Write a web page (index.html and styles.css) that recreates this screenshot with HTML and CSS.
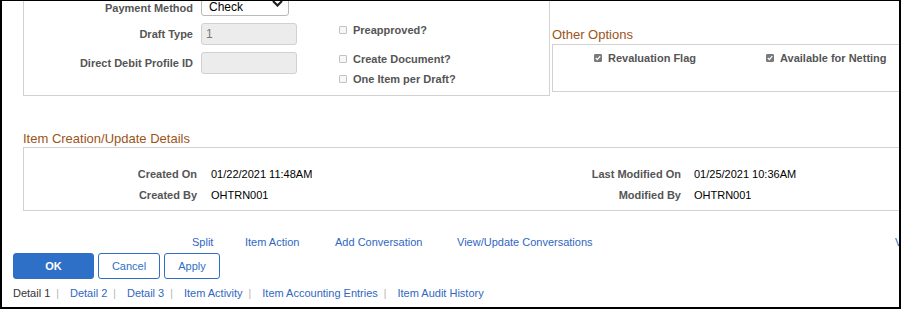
FILE: index.html
```html
<!DOCTYPE html>
<html lang="en">
<head>
<meta charset="utf-8">
<title>Item Details</title>
<link rel="stylesheet" href="styles.css">
</head>
<body>
<div class="frame">
  <div class="page">
    <div class="top-row">
      <div class="box pay-box">
        <div class="fields">
          <div class="field first">
            <span class="label">Payment Method</span>
            <div class="select">
              <span class="select-text">Check</span>
              <svg class="chev" width="11" height="7" viewBox="0 0 11 7"><polyline points="1,1 5.5,5.5 10,1" fill="none" stroke="#222" stroke-width="2.2"/></svg>
            </div>
          </div>
          <div class="field">
            <span class="label">Draft Type</span>
            <div class="input">1</div>
          </div>
          <div class="field">
            <span class="label">Direct Debit Profile ID</span>
            <div class="input"></div>
          </div>
        </div>
        <div class="checks">
          <div class="check first"><span class="cb"></span><span class="clabel">Preapproved?</span></div>
          <div class="check second"><span class="cb"></span><span class="clabel">Create Document?</span></div>
          <div class="check"><span class="cb"></span><span class="clabel">One Item per Draft?</span></div>
        </div>
      </div>
      <div class="other">
        <h2 class="sec-title other-title">Other Options</h2>
        <div class="box other-box">
          <div class="check"><span class="cb on"><svg width="6" height="6" viewBox="0 0 6 6"><polyline points="0.8,3 2.4,4.6 5.2,1.2" fill="none" stroke="#fff" stroke-width="1.3"/></svg></span><span class="clabel">Revaluation Flag</span></div>
          <div class="check"><span class="cb on"><svg width="6" height="6" viewBox="0 0 6 6"><polyline points="0.8,3 2.4,4.6 5.2,1.2" fill="none" stroke="#fff" stroke-width="1.3"/></svg></span><span class="clabel">Available for Netting</span></div>
        </div>
      </div>
    </div>

    <section class="details">
      <h2 class="sec-title">Item Creation/Update Details</h2>
      <div class="box details-box">
        <span class="dlabel l1">Created On</span><span class="dval">01/22/2021 11:48AM</span>
        <span class="dlabel l2">Last Modified On</span><span class="dval">01/25/2021 10:36AM</span>
        <span class="dlabel l1">Created By</span><span class="dval">OHTRN001</span>
        <span class="dlabel l2">Modified By</span><span class="dval">OHTRN001</span>
      </div>
    </section>

    <nav class="links">
      <a>Split</a>
      <a>Item Action</a>
      <a>Add Conversation</a>
      <a>View/Update Conversations</a>
      <a>View Item Details</a>
    </nav>

    <div class="buttons">
      <button class="btn primary">OK</button>
      <button class="btn cancel">Cancel</button>
      <button class="btn apply">Apply</button>
    </div>

    <div class="tabs">
      <span class="tab current">Detail 1</span><span class="sep">|</span>
      <a class="tab">Detail 2</a><span class="sep">|</span>
      <a class="tab">Detail 3</a><span class="sep">|</span>
      <a class="tab">Item Activity</a><span class="sep">|</span>
      <a class="tab">Item Accounting Entries</a><span class="sep">|</span>
      <a class="tab">Item Audit History</a>
    </div>
  </div>
</div>
</body>
</html>
```

FILE: styles.css
```css
* { box-sizing: border-box; }
html, body { margin: 0; padding: 0; background: #fff; }
body {
  font-family: "Liberation Sans", Arial, sans-serif;
  font-size: 11px;
  color: #000;
}
.frame {
  width: 901px;
  height: 309px;
  border-style: solid;
  border-color: #000;
  border-width: 1px 2px 2px 2px;
  overflow: hidden;
  background: #fff;
}
.page {
  margin-top: -11px;
  padding-left: 11px;
  width: 920px;
}
.box { border: 1px solid #d2d2d2; }

/* top row */
.top-row {
  display: flex;
  align-items: flex-start;
  margin-left: 10px;
}
.pay-box {
  width: 527px;
  height: 106px;
  display: flex;
  align-items: flex-start;
  padding: 2px 0 0 0;
}
.fields { display: flex; flex-direction: column; gap: 7px; }
.field { display: flex; align-items: center; }
.field.first { align-items: flex-end; }
.label {
  width: 169px;
  margin-right: 8px;
  text-align: right;
  font-weight: bold;
  color: #555;
  line-height: 16px;
}
.select {
  width: 88px;
  height: 23px;
  border: 1px solid #b9b9b9;
  border-radius: 3px;
  background: #fff;
  display: flex;
  align-items: center;
  justify-content: space-between;
  padding: 0 5px 0 7px;
  font-size: 12px;
  color: #000;
}
.select-text { padding-top: 4px; }
.chev { margin-bottom: 3px; }
.input {
  width: 96px;
  height: 22px;
  border: 1px solid #d0d0d0;
  border-radius: 3px;
  background: #ececec;
  color: #777;
  font-size: 12px;
  line-height: 20px;
  padding-left: 4px;
}
.checks { margin-left: 42px; display: flex; flex-direction: column; }
.check {
  display: flex;
  align-items: center;
  height: 20px;
}
.check.first { margin-top: 27px; }
.check.second { margin-top: 9px; }
.cb {
  width: 8px;
  height: 8px;
  border: 1px solid #c2c2c2;
  border-radius: 1px;
  background: #f7f7f7;
  margin-right: 6px;
  display: flex;
  align-items: center;
  justify-content: center;
  flex: none;
}
.cb.on { background: #7a7a7a; border-color: #7a7a7a; }
.clabel { font-weight: bold; color: #555; }

.other { margin-left: 2px; width: 360px; }
.sec-title {
  margin: 0;
  font-size: 13px;
  font-weight: normal;
  color: #9c5419;
  line-height: 16px;
}
.other-title { margin: 37px 0 1px 0; }
.other-box {
  height: 48px;
  padding: 3px 0 0 41px;
  display: grid;
  grid-template-columns: 172px auto;
  align-content: start;
}

/* details */
.details { margin-left: 10px; }
.details .sec-title { margin-top: 35px; }
.details-box {
  width: 882px;
  padding: 15px 0 5px 0;
  display: grid;
  grid-template-columns: 187px 200px 283px 1fr;
  grid-auto-rows: 21px;
  align-items: center;
}
.dlabel { text-align: right; font-weight: bold; color: #555; }
.dlabel.l1 { padding-right: 14px; }
.dlabel.l2 { padding-right: 13px; }
.dval { color: #000; }

/* links */
.links {
  margin: 23px 0 0 179px;
  display: grid;
  grid-template-columns: 53px 90px 122px 438px auto;
  line-height: 16px;
  white-space: nowrap;
}
.links a, .tabs a { color: #2f67c1; text-decoration: none; }

/* buttons */
.buttons { margin-top: 3px; display: flex; gap: 4px; }
.btn {
  height: 26px;
  border-radius: 3px;
  font-family: "Liberation Sans", Arial, sans-serif;
  font-size: 11px;
  padding: 0;
  border: 1px solid #2e6fc7;
  background: #fff;
  color: #2e6fc7;
}
.btn.primary { width: 81px; background: #2e6fc7; color: #fff; font-weight: bold; }
.btn.cancel { width: 62px; }
.btn.apply { width: 56px; }

/* tabs */
.tabs { margin-top: 6px; line-height: 16px; white-space: nowrap; }
.tab.current { color: #333; }
.sep { color: #b0b0b0; margin: 0 8px 0 6px; font-size: 10px; }
```
